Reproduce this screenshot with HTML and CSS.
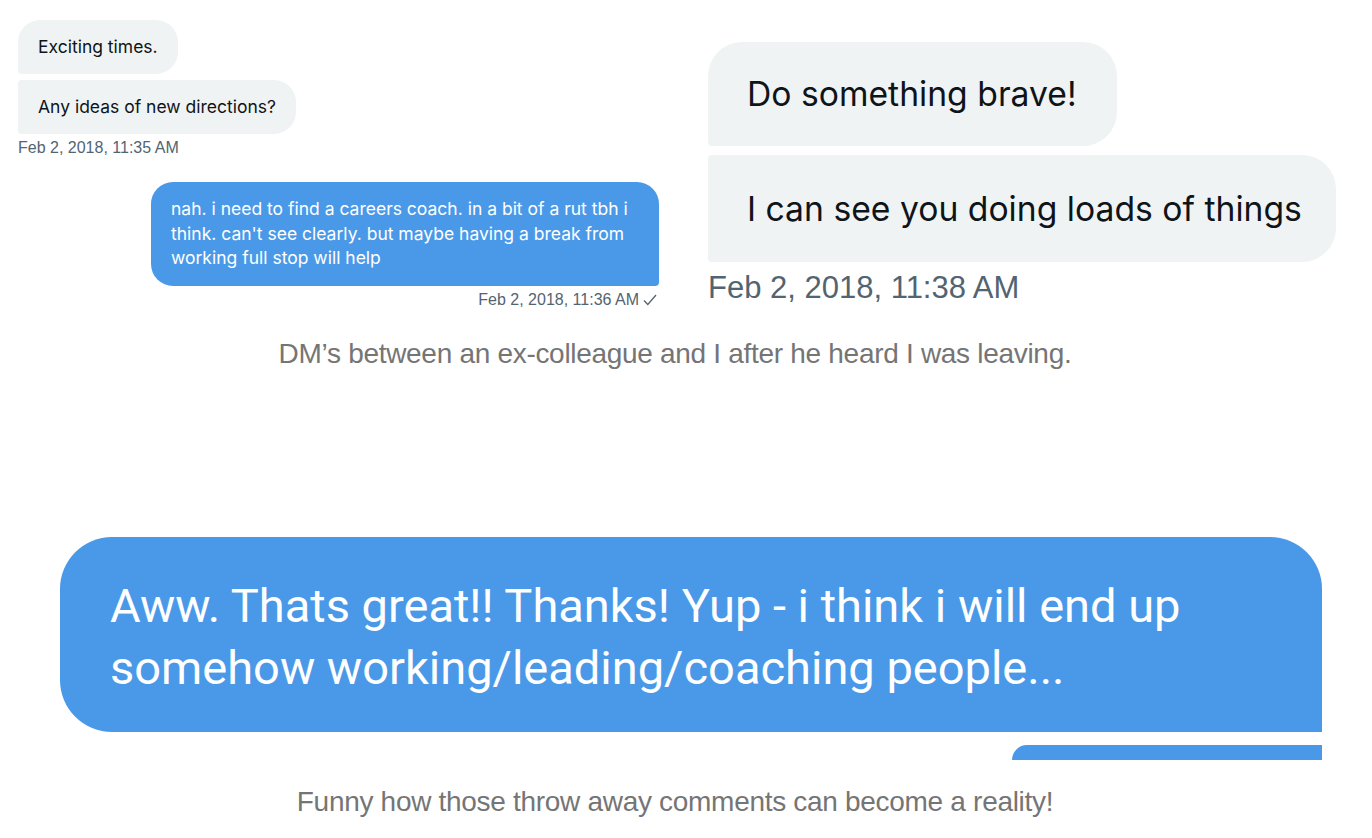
FILE: index.html
```html
<!DOCTYPE html>
<html lang="en">
<head>
<meta charset="utf-8">
<title>DMs</title>
<link rel="stylesheet" href="styles.css">
</head>
<body>
<main class="post">
  <figure class="fig fig-dm">
    <div class="dm-row">
      <div class="thread thread-small">
        <div class="bubble in first">Exciting times.</div>
        <div class="bubble in last">Any ideas of new directions?</div>
        <div class="stamp">Feb 2, 2018, 11:35 AM</div>
        <div class="bubble out">nah. i need to find a careers coach. in a bit of a rut tbh i<br>think. can't see clearly. but maybe having a break from<br>working full stop will help</div>
        <div class="stamp stamp-out">Feb 2, 2018, 11:36 AM <svg class="check" width="14" height="12" viewBox="0 0 14 12" aria-hidden="true"><polyline points="1,6.5 4.8,10.5 13,1" fill="none" stroke="#536471" stroke-width="1.3"/></svg></div>
      </div>
      <div class="thread thread-large">
        <div class="bubble big in first">Do something brave!</div>
        <div class="bubble big in last">I can see you doing loads of things</div>
        <div class="stamp stamp-big">Feb 2, 2018, 11:38 AM</div>
      </div>
    </div>
    <figcaption class="caption caption-1">DM’s between an ex-colleague and I after he heard I was leaving.</figcaption>
  </figure>

  <figure class="fig fig-big">
    <div class="shot">
      <div class="huge-bubble">Aww. Thats great!! Thanks! Yup - i think i will end up<br>somehow working/leading/coaching people...</div>
      <div class="huge-next"></div>
    </div>
    <figcaption class="caption caption-2">Funny how those throw away comments can become a reality!</figcaption>
  </figure>
</main>
</body>
</html>
```

FILE: styles.css
```css
* { box-sizing: border-box; }

html, body {
  margin: 0;
  padding: 0;
  background: #ffffff;
}

body {
  font-family: "Inter", "Liberation Sans", sans-serif;
  color: #0f1419;
}

.post {
  width: 1350px;
}

.fig {
  margin: 0;
}

.dm-row {
  display: flex;
  align-items: flex-start;
}

.thread {
  display: flex;
  flex-direction: column;
  align-items: flex-start;
}

.thread-small {
  width: 680px;
  padding: 20px 21px 0 18px;
}

.thread-large {
  width: 628px;
  margin-left: 28px;
  padding-top: 42px;
}

.bubble {
  background: #eff3f4;
  font-size: 17.5px;
  line-height: 22px;
  padding: 16px 20px;
  border-radius: 22px;
  white-space: nowrap;
}

.bubble.in.first {
  border-bottom-left-radius: 4px;
}

.bubble.in.last {
  margin-top: 6px;
  border-top-left-radius: 4px;
  border-bottom-left-radius: 4px;
}

.stamp {
  margin-top: 5px;
  font-family: "Liberation Sans", sans-serif;
  font-size: 16px;
  line-height: 18px;
  color: #536471;
}

.bubble.out {
  align-self: flex-end;
  margin-top: 25px;
  width: 508px;
  padding: 15px 20px;
  line-height: 24.5px;
  background: #4a99e8;
  color: #ffffff;
  border-radius: 22px;
  border-bottom-right-radius: 4px;
}

.stamp-out {
  align-self: flex-end;
  margin-top: 5px;
  margin-right: 2px;
  display: flex;
  align-items: center;
  gap: 4px;
}

.check {
  display: block;
}

.bubble.big {
  font-size: 33.7px;
  line-height: 40px;
  padding: 32px 39px;
  border-radius: 34px;
}

.bubble.big.first {
  width: 409px;
  height: 104px;
  border-bottom-left-radius: 4px;
}

.bubble.big.last {
  margin-top: 9px;
  width: 628px;
  height: 107px;
  padding-top: 34px;
  border-top-left-radius: 4px;
  border-bottom-left-radius: 4px;
}

.stamp-big {
  margin-top: 8px;
  font-size: 31px;
  line-height: 36px;
}

.caption {
  font-family: "Liberation Sans", sans-serif;
  font-size: 28px;
  line-height: 36px;
  color: #757575;
  text-align: center;
  letter-spacing: -0.3px;
}

.caption-1 {
  margin-top: 27px;
}

.fig-big {
  margin-top: 165px;
}

.shot {
  margin-left: 60px;
  width: 1262px;
  height: 223px;
  overflow: hidden;
  display: flex;
  flex-direction: column;
  align-items: flex-end;
}

.huge-bubble {
  align-self: stretch;
  height: 195px;
  background: #4a99e8;
  color: #ffffff;
  font-family: "Roboto", "Liberation Sans", sans-serif;
  font-size: 47px;
  line-height: 62px;
  padding: 38px 50px;
  border-radius: 52px 52px 0 52px;
  white-space: nowrap;
}

.huge-next {
  margin-top: 13px;
  width: 310px;
  height: 60px;
  background: #4a99e8;
  border-radius: 44px 0 0 0;
}

.caption-2 {
  margin-top: 24px;
}
```
